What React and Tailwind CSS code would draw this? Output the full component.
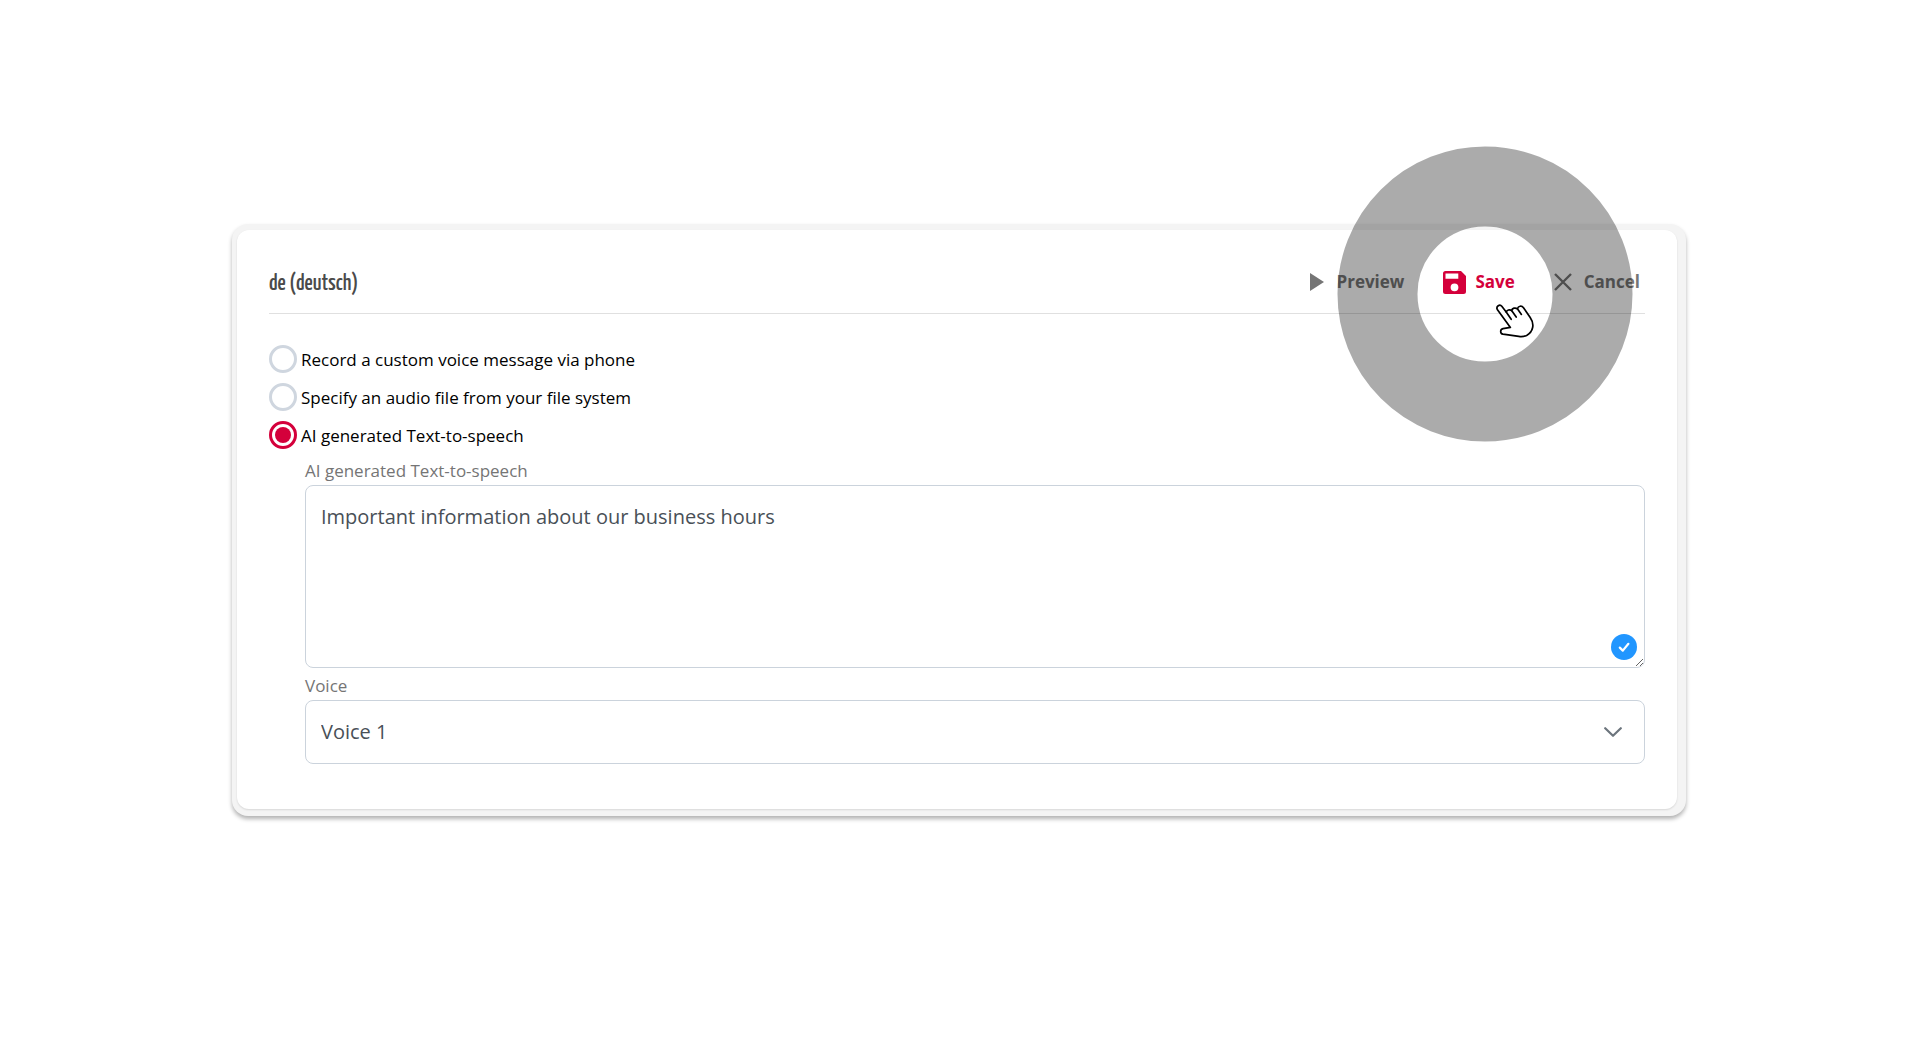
import { useState } from "react";

const SOURCES = [
  { id: "phone", label: "Record a custom voice message via phone" },
  { id: "file", label: "Specify an audio file from your file system" },
  { id: "tts", label: "AI generated Text-to-speech" },
];

function PlayIcon() {
  return (
    <svg width="14" height="18" viewBox="0 0 14 18" fill="currentColor" aria-hidden="true">
      <path d="M0 0v18l14-9z" />
    </svg>
  );
}

function SaveIcon() {
  return (
    <svg width="23" height="23" viewBox="0 0 23 23" fill="currentColor" aria-hidden="true">
      <path
        fillRule="evenodd"
        d="M2.500 0H18l5 5v15.500a2.500 2.500 0 0 1-2.500 2.500h-18A2.500 2.500 0 0 1 0 20.500v-18A2.500 2.500 0 0 1 2.500 0zM2.500 2.600v5.100h12.800V2.600zM11.500 12.400a3.900 3.900 0 1 0 0 7.800 3.900 3.900 0 0 0 0-7.800z"
      />
    </svg>
  );
}

function CloseIcon() {
  return (
    <svg width="18" height="18" viewBox="0 0 18 18" fill="none" stroke="currentColor" strokeWidth="2.400" aria-hidden="true">
      <path d="M1 1l16 16M17 1L1 17" />
    </svg>
  );
}

function Spotlight() {
  return (
    <svg
      width="296"
      height="296"
      viewBox="0 0 296 296"
      className="pointer-events-none absolute -left-[106px] top-1/2 z-10 -mt-[136px] max-w-none"
      aria-hidden="true"
    >
      <circle cx="148" cy="148" r="107.500" fill="none" stroke="#000" strokeOpacity="0.33" strokeWidth="80" />
      <g transform="translate(159 158)" fill="#fff" stroke="#000" strokeWidth="1.700" strokeLinecap="round" strokeLinejoin="round">
        <path d="M1.300 5.400C-.2 2.600 3.700-.4 5.800 2.300L10.200 8.100C10.900 6.100 13.600 5.100 15.600 6.500C16.300 4.100 19.300 3.300 21.400 4.800C22.300 1.800 25.700 1.400 27.500 3.700L34.200 13.400C38.800 20 37.300 27.800 30.600 31.400C28.200 32.600 25.600 32.800 22.800 32.400L7 30.200C3.900 29.600 3.900 25.200 7 24.600L14.400 23.400Z" />
        <path d="M10.200 8.100l5 7.200M15.600 6.500l4.600 6.600M21.400 4.800l4 5.600" fill="none" />
      </g>
    </svg>
  );
}

export default function App() {
  const [source, setSource] = useState("tts");
  const [text, setText] = useState("Important information about our business hours");
  const [voice, setVoice] = useState("1");

  return (
    <main className="flex min-h-screen items-center overflow-hidden bg-white pr-[234px] pl-[232px] font-['Open_Sans',sans-serif]">
      <div className="min-w-0 flex-1 rounded-2xl bg-[#f4f4f4] pt-[6px] pr-[9px] pb-[7px] pl-[5px] shadow-[0_3px_4px_rgba(0,0,0,0.3)]">
        <section className="rounded-xl bg-white px-8 pt-8 pb-[45px] shadow-[0_1px_2px_rgba(0,0,0,0.12)]">
          <header className="flex items-center justify-between border-b border-[#e0e0e0] pb-[11px]">
            <h1 className="pt-1 font-['Yanone_Kaffeesatz','Open_Sans',sans-serif] text-[23px] leading-9 font-medium text-[#4a4a4a]">
              de (deutsch)
            </h1>
            <div className="flex items-center gap-[39px] pr-[5px] text-[17px] font-bold text-[#757575]">
              <button type="button" className="flex items-center gap-3">
                <PlayIcon />
                Preview
              </button>
              <div className="relative">
                <button type="button" className="flex items-center gap-[9px] text-[#d4003b]">
                  <SaveIcon />
                  Save
                </button>
                <Spotlight />
              </div>
              <button type="button" className="flex items-center gap-3">
                <CloseIcon />
                Cancel
              </button>
            </div>
          </header>

          <div className="mt-[31px] flex flex-col gap-2" role="radiogroup" aria-label="Audio source">
            {SOURCES.map((item) => (
              <label key={item.id} className="flex items-start gap-1 text-[17px] leading-[30px] text-black">
                <input
                  type="radio"
                  name="source"
                  value={item.id}
                  checked={source === item.id}
                  onChange={() => setSource(item.id)}
                  className="size-7 shrink-0 appearance-none rounded-full border-3 border-[#cfd6df] bg-clip-content p-[3px] checked:border-[#d4003b] checked:bg-[#d4003b]"
                />
                {item.label}
              </label>
            ))}
          </div>

          <div className="mt-2 pl-9">
            <label htmlFor="tts-text" className="block pb-[2px] text-[17px] leading-6 text-[#757575]">
              AI generated Text-to-speech
            </label>
            <div className="relative">
              <textarea
                id="tts-text"
                value={text}
                onChange={(event) => setText(event.target.value)}
                className="block h-[183px] w-full resize-y rounded-lg border border-[#cbd3dc] bg-white px-[15px] py-[15px] text-xl leading-8 text-[#495057] outline-none"
              />
              <svg width="26" height="26" viewBox="0 0 26 26" className="pointer-events-none absolute right-2 bottom-2" aria-hidden="true">
                <circle cx="13" cy="13" r="13" fill="#2196ff" />
                <path d="M8.800 13.600l3 3 5.600-6.800" fill="none" stroke="#fff" strokeWidth="2.200" strokeLinecap="round" strokeLinejoin="round" />
              </svg>
            </div>

            <label htmlFor="tts-voice" className="mt-[6px] block pb-[2px] text-[17px] leading-6 text-[#757575]">
              Voice
            </label>
            <div className="relative">
              <select
                id="tts-voice"
                value={voice}
                onChange={(event) => setVoice(event.target.value)}
                className="block h-16 w-full appearance-none rounded-lg border border-[#cbd3dc] bg-white px-[15px] text-xl text-[#495057] outline-none"
              >
                <option value="1">Voice 1</option>
              </select>
              <svg
                width="18"
                height="10"
                viewBox="0 0 18 10"
                fill="none"
                stroke="#6c757d"
                strokeWidth="2.200"
                strokeLinecap="round"
                strokeLinejoin="round"
                className="pointer-events-none absolute top-[27px] right-[23px]"
                aria-hidden="true"
              >
                <path d="M1.200 1.200L9 8.800l7.800-7.600" />
              </svg>
            </div>
          </div>
        </section>
      </div>
    </main>
  );
}
